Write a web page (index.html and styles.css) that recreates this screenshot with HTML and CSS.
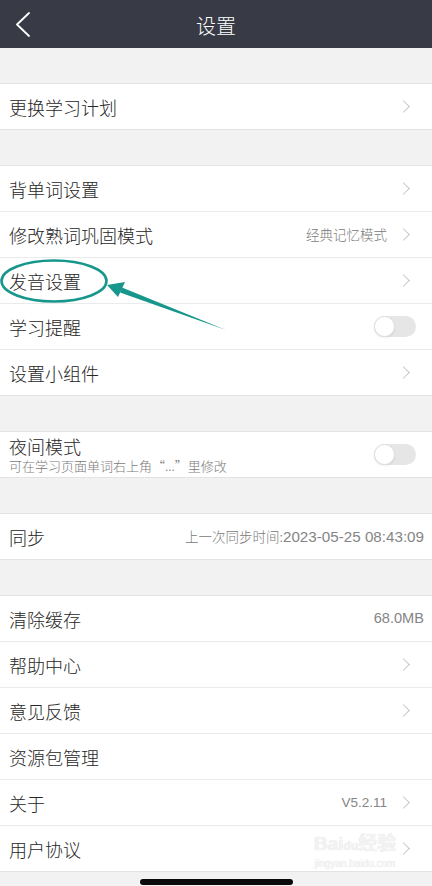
FILE: index.html
```html
<!DOCTYPE html>
<html lang="zh-CN">
<head>
<meta charset="utf-8">
<title>设置</title>
<link rel="stylesheet" href="styles.css">
</head>
<body>
<div class="page">
  <header class="topbar">
    <svg class="back" width="16" height="26" viewBox="0 0 16 26"><path d="M14 1 L2 12.5 L14 24" fill="none" stroke="#fff" stroke-width="1.8" stroke-linecap="round" stroke-linejoin="round"/></svg>
    <div class="title">设置</div>
  </header>

  <section class="group">
    <div class="row"><span class="label">更换学习计划</span><span class="right"><i class="chev"></i></span></div>
  </section>

  <section class="group">
    <div class="row"><span class="label">背单词设置</span><span class="right"><i class="chev"></i></span></div>
    <div class="row"><span class="label">修改熟词巩固模式</span><span class="right"><span class="val">经典记忆模式</span><i class="chev"></i></span></div>
    <div class="row"><span class="label">发音设置</span><span class="right"><i class="chev"></i></span></div>
    <div class="row"><span class="label">学习提醒</span><span class="right tog"><span class="toggle"><span class="knob"></span></span></span></div>
    <div class="row"><span class="label">设置小组件</span><span class="right"><i class="chev"></i></span></div>
  </section>

  <section class="group">
    <div class="row two">
      <div class="stack"><span class="label">夜间模式</span><span class="sub">可在学习页面单词右上角“...”里修改</span></div>
      <span class="right tog"><span class="toggle"><span class="knob"></span></span></span>
    </div>
  </section>

  <section class="group">
    <div class="row"><span class="label">同步</span><span class="right plain"><span class="val">上一次同步时间:<span class="num wide">2023-05-25 08:43:09</span></span></span></div>
  </section>

  <section class="group">
    <div class="row"><span class="label">清除缓存</span><span class="right plain"><span class="val num">68.0MB</span></span></div>
    <div class="row"><span class="label">帮助中心</span><span class="right"><i class="chev"></i></span></div>
    <div class="row"><span class="label">意见反馈</span><span class="right"><i class="chev"></i></span></div>
    <div class="row"><span class="label">资源包管理</span><span class="right"></span></div>
    <div class="row"><span class="label">关于</span><span class="right"><span class="val num ver">V5.2.11</span><i class="chev"></i></span></div>
    <div class="row"><span class="label">用户协议</span><span class="right"><i class="chev"></i></span></div>
  </section>

  <div class="home-bar"></div>

  <div class="watermark"><span class="wm1">Bai<span class="paw">du</span>经验</span><span class="wm2">jingyan.baidu.com</span></div>

  <svg class="annot" width="432" height="886" viewBox="0 0 432 886">
    <ellipse cx="54" cy="281" rx="52.5" ry="20.5" fill="none" stroke="#17968b" stroke-width="2.6"/>
    <polygon points="226,330 120,292.5 122,287.5" fill="#17968b"/>
    <polygon points="107,285 125,282 118,297" fill="#17968b"/>
  </svg>
</div>
</body>
</html>
```

FILE: styles.css
```css
* { box-sizing: border-box; }
html, body { margin: 0; padding: 0; }
body {
  background: #f2f2f2;
  font-family: "Noto Sans CJK SC", "Noto Sans", "Liberation Sans", sans-serif;
  color: #2b2b2b;
}
.page {
  position: relative;
  width: 432px;
  height: 886px;
  overflow: hidden;
  background: #f2f2f2;
}
.topbar {
  height: 48px;
  background: #383a46;
  display: flex;
  align-items: center;
  justify-content: center;
  position: relative;
}
.back {
  position: absolute;
  left: 15px;
  top: 12px;
}
.title {
  color: #fff;
  font-size: 20px;
  font-weight: 300;
  line-height: 1;
  margin-top: 4px;
}
.group {
  margin-top: 35px;
  background: #fff;
  border-top: 1px solid #e3e3e3;
  border-bottom: 1px solid #e3e3e3;
}
.row {
  height: 46px;
  display: flex;
  align-items: center;
  justify-content: space-between;
  padding-left: 9px;
  border-bottom: 1px solid #ebebeb;
}
.row:last-child {
  height: 45px;
  border-bottom: none;
}
.label {
  font-size: 18px;
  font-weight: 300;
  line-height: 20px;
  color: #262626;
}
.right {
  display: flex;
  align-items: center;
  padding-right: 22px;
  gap: 12px;
}
.right.plain { padding-right: 8px; }
.right.tog { padding-right: 16px; }
.val {
  font-size: 13.5px;
  font-weight: 300;
  color: #7a7a7a;
  line-height: 1;
}
.num {
  font-family: "Liberation Sans", "Noto Sans CJK SC", sans-serif;
  font-size: 14.6px;
  font-weight: 400;
  color: #858585;
}
.num.wide { font-size: 15.2px; }
.ver { font-size: 13.5px; }
.chev {
  display: block;
  width: 9px;
  height: 9px;
  border-top: 1.6px solid #c6c6c6;
  border-right: 1.6px solid #c6c6c6;
  transform: rotate(45deg);
  margin-right: 2px;
}
.toggle {
  display: block;
  width: 42px;
  height: 21px;
  border-radius: 11px;
  background: #e6e6e6;
  position: relative;
}
.knob {
  position: absolute;
  left: 0;
  top: 0;
  width: 21px;
  height: 21px;
  border-radius: 50%;
  background: #fff;
  border: 1px solid #e0e0e0;
  box-shadow: 0 1px 2px rgba(0,0,0,0.08);
}
.stack {
  display: flex;
  flex-direction: column;
  gap: 2px;
  padding-top: 1px;
}
.stack .label { line-height: 19px; }
.sub {
  font-size: 13px;
  font-weight: 300;
  line-height: 16px;
  color: #7a7a7a;
}
.home-bar {
  position: absolute;
  left: 140px;
  top: 879px;
  width: 153px;
  height: 6px;
  border-radius: 3px;
  background: #0a0a0a;
}
.watermark {
  position: absolute;
  left: 314px;
  top: 834px;
  display: flex;
  flex-direction: column;
  align-items: center;
  color: #f3f3f3;
  text-shadow: 0 0 1px #dcdcdc;
  pointer-events: none;
}
.wm1 {
  font-family: "Liberation Sans", "Noto Sans CJK SC", sans-serif;
  font-size: 19px;
  line-height: 1;
  font-weight: bold;
}
.paw { font-size: 12px; }
.wm2 {
  font-family: "Liberation Sans", sans-serif;
  font-size: 10px;
  line-height: 1;
  margin-top: 6px;
}
.annot {
  position: absolute;
  left: 0;
  top: 0;
  pointer-events: none;
}
```
